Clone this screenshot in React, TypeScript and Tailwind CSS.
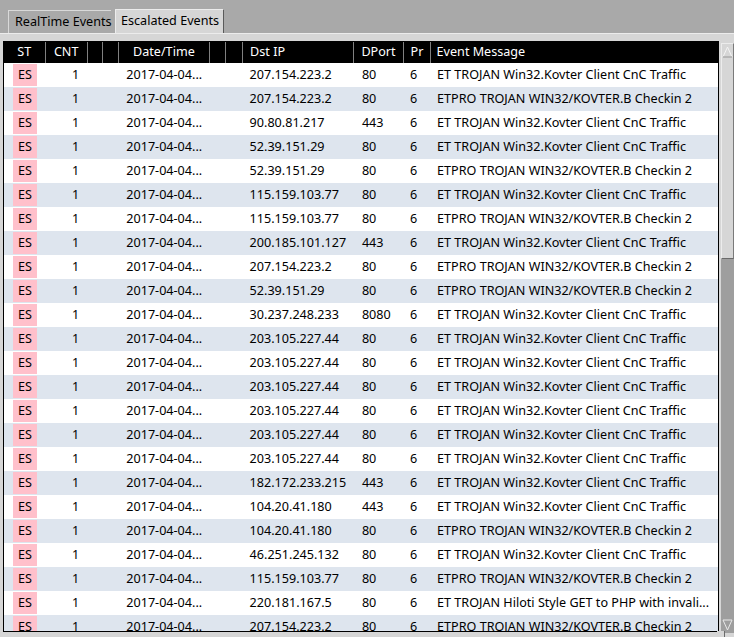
import React from "react";

const ET = "ET TROJAN Win32.Kovter Client CnC Traffic";
const PRO = "ETPRO TROJAN WIN32/KOVTER.B Checkin 2";

const rows: [string, string, string][] = [
  ["207.154.223.2", "80", ET],
  ["207.154.223.2", "80", PRO],
  ["90.80.81.217", "443", ET],
  ["52.39.151.29", "80", ET],
  ["52.39.151.29", "80", PRO],
  ["115.159.103.77", "80", ET],
  ["115.159.103.77", "80", PRO],
  ["200.185.101.127", "443", ET],
  ["207.154.223.2", "80", PRO],
  ["52.39.151.29", "80", PRO],
  ["30.237.248.233", "8080", ET],
  ["203.105.227.44", "80", ET],
  ["203.105.227.44", "80", ET],
  ["203.105.227.44", "80", ET],
  ["203.105.227.44", "80", ET],
  ["203.105.227.44", "80", ET],
  ["203.105.227.44", "80", ET],
  ["182.172.233.215", "443", ET],
  ["104.20.41.180", "443", ET],
  ["104.20.41.180", "80", PRO],
  ["46.251.245.132", "80", ET],
  ["115.159.103.77", "80", PRO],
  ["220.181.167.5", "80", "ET TROJAN Hiloti Style GET to PHP with invali..."],
  ["207.154.223.2", "80", PRO],
];

const cols = [41, 42, 15, 16, 91, 16, 17, 111, 49, 27, 287];

export default function App() {
  return (
    <div
      className="w-[734px] h-[637px] bg-[#a9a9a9] flex flex-col overflow-hidden text-[12.6px] text-black"
      style={{ fontFamily: '"Noto Sans", "Open Sans", sans-serif' }}
    >
      {/* tabs */}
      <div className="flex items-end pl-[8px] pt-[9px] h-[33px]">
        <div className="relative h-[23px] w-[107px] bg-[#a9a9a9] border-t border-l border-[#d9d9d9] flex items-center pl-[6px] leading-none">
          RealTime Events
          <div className="absolute -right-px -top-px w-[5px] h-[5px] bg-[#a9a9a9]" />
        </div>
        <div className="relative h-[24px] w-[109px] bg-[#d6d6d6] border-t border-l border-[#ececec] border-r border-r-[#5a5a5a] flex items-center pl-[5px] leading-none">
          Escalated Events
        </div>
      </div>

      {/* pane */}
      <div className="flex-1 bg-[#d6d6d6] border-t border-[#ececec] pl-[3px] pt-[7px] flex">
        <div className="w-[716px] h-[591px] border border-black bg-white overflow-hidden">
          <table className="table-fixed border-collapse" style={{ width: 714 }}>
            <colgroup>
              {cols.map((w, i) => (
                <col key={i} style={{ width: w }} />
              ))}
            </colgroup>
            <thead>
              <tr className="bg-black text-white h-[21px]">
                <th className="font-normal text-center border-r border-[#808080]">ST</th>
                <th className="font-normal text-center border-r border-[#808080]">CNT</th>
                <th className="border-r border-[#808080]" />
                <th className="border-r border-[#808080]" />
                <th className="font-normal text-center border-r border-[#808080]">Date/Time</th>
                <th className="border-r border-[#808080]" />
                <th className="border-r border-[#808080]" />
                <th className="font-normal text-left pl-[7px] border-r border-[#808080]">Dst IP</th>
                <th className="font-normal text-left pl-[7px] border-r border-[#808080]">DPort</th>
                <th className="font-normal text-left pl-[7px] border-r border-[#808080]">Pr</th>
                <th className="font-normal text-left pl-[6px]">Event Message</th>
              </tr>
            </thead>
            <tbody>
              {rows.map(([ip, port, msg], i) => (
                <tr key={i} className={i % 2 === 0 ? "bg-white h-[24px]" : "bg-[#dee5ee] h-[24px]"}>
                  <td className="p-0 pl-[9px]">
                    <div className="w-[24px] h-[22px] bg-[#ffc0cb] flex items-center justify-center">ES</div>
                  </td>
                  <td className="text-right p-0 pr-[8px]">1</td>
                  <td />
                  <td />
                  <td className="pl-[8px] whitespace-nowrap" colSpan={3}>2017-04-04...</td>
                  <td className="pl-[7px] whitespace-nowrap">{ip}</td>
                  <td className="pl-[8px]">{port}</td>
                  <td className="pl-[7px]">6</td>
                  <td className="pl-[7px] whitespace-nowrap overflow-hidden">{msg}</td>
                </tr>
              ))}
            </tbody>
          </table>
        </div>

        {/* scrollbar */}
        <div className="ml-[2px] w-[13px] h-[590px] mt-[2px] bg-[#9e9e9e] flex flex-col relative">
          <div className="h-[216px] bg-[#d6d6d6] border-l border-t border-[#ececec] border-r border-r-[#7a7a7a] border-b border-b-[#6a6a6a] flex justify-center pt-[2px]">
            <svg width="11" height="12" viewBox="0 0 11 12">
              <path d="M5.5 1 L10 11 L1 11 Z" fill="none" stroke="#f4f4f4" strokeWidth="1" />
              <path d="M10 11 L1 11" stroke="#888" strokeWidth="1" />
            </svg>
          </div>
          <div className="flex-1 bg-[#9e9e9e]" />
          <div className="h-[14px] flex justify-center bg-[#9e9e9e]">
            <svg width="11" height="12" viewBox="0 0 11 12">
              <path d="M1 1 L10 1 L5.5 11 Z" fill="none" stroke="#e8e8e8" strokeWidth="1" />
            </svg>
          </div>
          <div className="absolute -left-[4px] -bottom-[6px] w-[8px] h-[8px] bg-[#d6d6d6] border-r border-b border-[#6a6a6a]" />
        </div>
      </div>
    </div>
  );
}
